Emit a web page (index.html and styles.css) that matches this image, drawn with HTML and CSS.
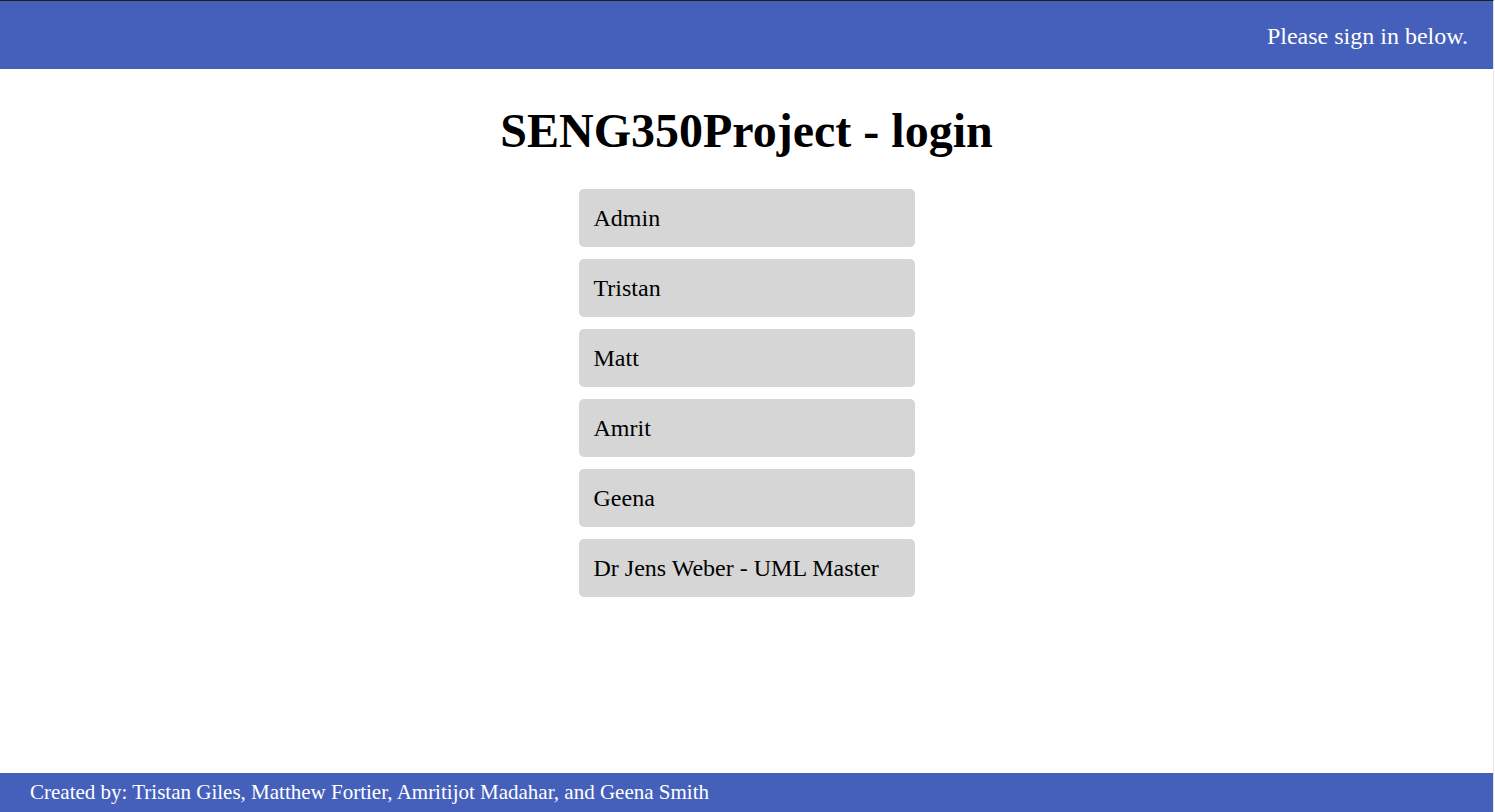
FILE: index.html
```html
<!DOCTYPE html>
<html>
<head>
<meta charset="utf-8">
<link rel="stylesheet" href="styles.css">
</head>
<body>
<div class="frame">
  <header class="topbar">
    <span class="topbar-msg">Please sign in below.</span>
  </header>
  <main class="content">
    <h1 class="title">SENG350Project - login</h1>
    <div class="users">
      <button class="user">Admin</button>
      <button class="user">Tristan</button>
      <button class="user">Matt</button>
      <button class="user">Amrit</button>
      <button class="user">Geena</button>
      <button class="user">Dr Jens Weber - UML Master</button>
    </div>
  </main>
  <footer class="footer">Created by: Tristan Giles, Matthew Fortier, Amritijot Madahar, and Geena Smith</footer>
</div>
</body>
</html>
```
FILE: styles.css
```css
html, body {
  margin: 0;
  padding: 0;
  height: 100%;
  background: #ffffff;
}
body {
  font-family: "Liberation Serif", "Times New Roman", serif;
  color: #000;
}
.frame {
  width: 1493px;
  height: 811px;
  border-top: 1px solid #1e1e1e;
  border-right: 1px solid #e6e6e6;
  display: flex;
  flex-direction: column;
}
.topbar {
  height: 68px;
  background: #4560bb;
  color: #fff;
  display: flex;
  align-items: center;
  justify-content: flex-end;
  padding-right: 25px;
  font-size: 24px;
  flex-shrink: 0;
}
.topbar-msg {
  margin-top: 2px;
}
.content {
  flex: 1;
  display: flex;
  flex-direction: column;
  align-items: center;
}
.title {
  margin: 33px 0 29px;
  font-size: 48px;
  font-weight: bold;
  line-height: 58px;
}
.users {
  display: flex;
  flex-direction: column;
  gap: 12px;
  width: 336px;
}
.user {
  height: 58px;
  background: #d6d6d6;
  border: none;
  border-radius: 5px;
  text-align: left;
  padding: 0 15px;
  font-family: "Liberation Serif", "Times New Roman", serif;
  font-size: 24px;
  color: #000;
}
.footer {
  height: 39px;
  background: #4560bb;
  color: #fff;
  font-size: 21px;
  display: flex;
  align-items: center;
  padding-left: 30px;
  flex-shrink: 0;
}
```
